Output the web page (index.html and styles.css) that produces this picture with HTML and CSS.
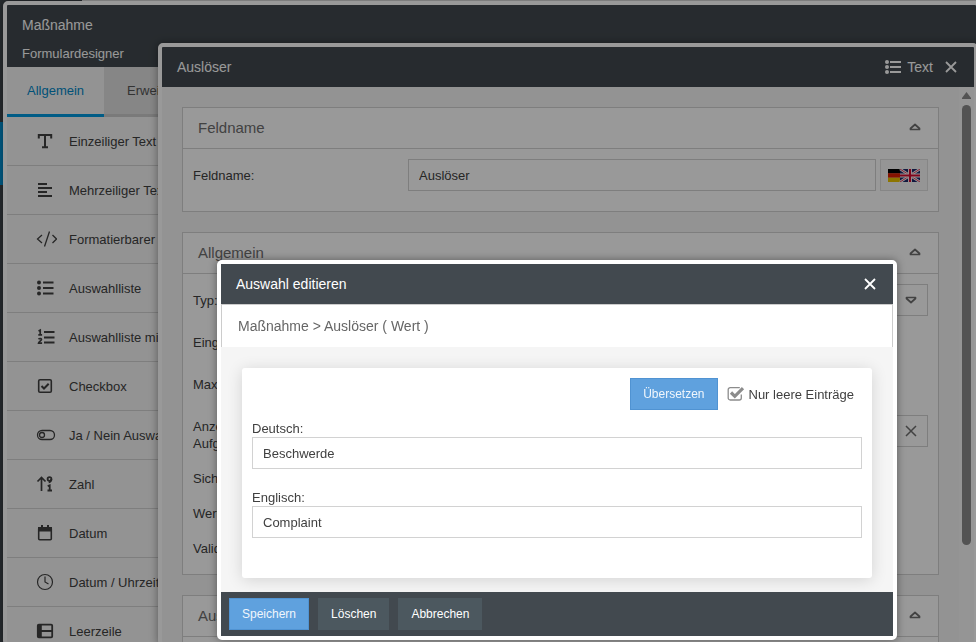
FILE: index.html
```html
<!DOCTYPE html>
<html lang="de">
	<head>
		<meta charset="utf-8">
		<meta name="viewport" content="width=device-width, initial-scale=1.0">
		<title>Formulardesigner</title>
		<link rel="stylesheet" href="styles.css">
	</head>
	<body>
		<div class="sidebar"><div class="sidebar-active"></div></div>

		<!-- Form designer -->
		<section class="window designer">
			<header class="designer-header">
				<h1>Maßnahme</h1>
				<h2>Formulardesigner</h2>
			</header>
			<nav class="tabs">
				<a class="tab active" href="#allgemein">Allgemein</a>
				<a class="tab" href="#erweitert">Erweitert</a>
			</nav>
			<ul class="fields">
				<li>
					<svg class="icon" viewBox="0 0 24 24"><path d="M5.800 9.500V6h12.400v3.500M12 6v12M9 18.200h6" stroke-width="2"/></svg>
					<span>Einzeiliger Text</span>
				</li>
				<li>
					<svg class="icon" viewBox="0 0 24 24"><path d="M5 6h9M5 10h14M5 14h9M5 18h14" stroke-width="2"/></svg>
					<span>Mehrzeiliger Text</span>
				</li>
				<li>
					<svg class="icon" viewBox="0 0 24 24"><path d="M9 8l-4.500 4L9 16M19.500 8l4 4-4 4M16.500 4.500l-5 15" stroke-width="1.300"/></svg>
					<span>Formatierbarer Text</span>
				</li>
				<li>
					<svg class="icon" viewBox="0 0 24 24"><path d="M10 6.500h10.500M10 12h10.500M10 17.500h10.500" stroke-width="2"/><g class="solid"><circle cx="6" cy="6.500" r="2"/><circle cx="6" cy="12" r="2"/><circle cx="6" cy="17.500" r="2"/></g></svg>
					<span>Auswahlliste</span>
				</li>
				<li>
					<svg class="icon" viewBox="0 0 24 24"><path d="M11 7h10.500M11 12.500h10.500M11 17.500h10.500" stroke-width="2"/><path d="M5.500 6l1.700-.8v4.600M5.300 9.800h3.800M5.500 14.300c1-1.300 3-.9 3 .3 0 1.200-3 2.100-3 3.600h3.600" stroke-width="1.700"/></svg>
					<span>Auswahlliste mit Wert</span>
				</li>
				<li>
					<svg class="icon" viewBox="0 0 24 24"><rect x="5.700" y="5.700" width="12.600" height="12.600" rx="1.300" stroke-width="1.600"/><path d="M8.500 12l2.500 2.500 4.700-4.800" stroke-width="2"/></svg>
					<span>Checkbox</span>
				</li>
				<li>
					<svg class="icon" viewBox="0 0 24 24"><rect x="4.500" y="7.500" width="17" height="9" rx="4.500" stroke-width="1.300"/><circle cx="9" cy="12" r="2.500" stroke-width="1.300"/></svg>
					<span>Ja / Nein Auswahl</span>
				</li>
				<li>
					<svg class="icon" viewBox="0 0 24 24"><path d="M8.500 19V5.500M4.500 9.500l4-4 4 4" stroke-width="1.700"/><circle cx="16.500" cy="7" r="1.900" stroke-width="1.800"/><path d="M18.400 7c0 2-.9 3-2.700 3.300M14.700 14.200l2-.8v5M14.500 18.500h4.500" stroke-width="1.800"/></svg>
					<span>Zahl</span>
				</li>
				<li>
					<svg class="icon" viewBox="0 0 24 24"><rect x="5.700" y="6.700" width="12.600" height="12" rx="1" stroke-width="1.600"/><path class="solid" d="M5 6h14v4.500H5zM8 4h2v3H8zM14 4h2v3h-2z"/></svg>
					<span>Datum</span>
				</li>
				<li>
					<svg class="icon" viewBox="0 0 24 24"><circle cx="12" cy="12" r="7.500" stroke-width="1.200"/><path d="M12 6.500V12l3.500 2" stroke-width="1.200"/></svg>
					<span>Datum / Uhrzeit</span>
				</li>
				<li>
					<svg class="icon" viewBox="0 0 24 24"><rect x="4.800" y="5.700" width="14.400" height="12.600" rx="1" stroke-width="1.800"/><path d="M8 12h11.200" stroke-width="1.800"/><path class="solid" d="M4.800 5.700h4v12.600h-4z"/></svg>
					<span>Leerzeile</span>
				</li>
			</ul>
		</section>

		<!-- Field settings -->
		<section class="window settings">
			<header class="window-header">
				<h2>Auslöser</h2>
				<span class="field-type">
					<svg class="type-icon" viewBox="0 0 18 16"><path d="M6 3h11M6 8h11M6 13h11" stroke-width="2"/><g class="solid"><circle cx="3" cy="3" r="2"/><circle cx="3" cy="8" r="2"/><circle cx="3" cy="13" r="2"/></g></svg>
					Text
				</span>
				<button class="close" type="button" aria-label="Schließen">
					<svg viewBox="0 0 12 12"><path d="M1 1l10 10M11 1L1 11" stroke-width="1.800"/></svg>
				</button>
			</header>
			<div class="settings-body">
				<div class="panels">
					<section class="panel">
						<header class="panel-header">
							<h3>Feldname</h3>
							<svg class="arrow" viewBox="0 0 12 8"><path d="M6 1.500L10.500 5.500V6.500H1.500V5.500z"/></svg>
						</header>
						<div class="panel-body">
							<div class="row">
								<label for="feldname">Feldname:</label>
								<input class="text" id="feldname" type="text" value="Auslöser">
								<button class="languages" type="button" aria-label="Sprachen">
									<svg viewBox="0 0 32 13">
										<path fill="#000" d="M0 0h12v4.500H0z"/><path fill="#de1f00" d="M0 4.300h12v4.400H0z"/><path fill="#ebc400" d="M0 8.700h12V13H0z"/>
										<path fill="#1d2a69" d="M12 0h20v13H12z"/>
										<path class="white" stroke-width="2.600" d="M12 0l20 13M32 0L12 13"/>
										<path class="red" stroke-width=".8" d="M12 0l20 13M32 0L12 13"/>
										<path class="white" stroke-width="4" d="M22 0v13M12 6.500h20"/>
										<path class="red" stroke-width="2.200" d="M22 0v13M12 6.500h20"/>
									</svg>
								</button>
							</div>
						</div>
					</section>

					<section class="panel">
						<header class="panel-header">
							<h3>Allgemein</h3>
							<svg class="arrow" viewBox="0 0 12 8"><path d="M6 1.500L10.500 5.500V6.500H1.500V5.500z"/></svg>
						</header>
						<div class="panel-body long">
							<div class="row">
								<label for="typ">Typ:</label>
								<div class="select">
									<select id="typ"><option></option></select>
									<svg class="arrow" viewBox="0 0 12 8"><path d="M6 6.500L10.500 2.500V1.500H1.500V2.500z"/></svg>
								</div>
							</div>
							<div class="row tall"><span>Eingabe:</span></div>
							<div class="row tall"><span>Maximal:</span></div>
							<div class="row">
								<label for="anzeige">Anzeige<br>Aufgabe:</label>
								<div class="clearable">
									<input class="text" id="anzeige" type="text">
									<button type="button" aria-label="Leeren">
										<svg viewBox="0 0 12 12"><path d="M1 1l10 10M11 1L1 11" stroke-width="1.500"/></svg>
									</button>
								</div>
							</div>
							<div class="row"><span>Sichtbar:</span></div>
							<div class="row"><span>Werte:</span></div>
							<div class="row"><span>Validierung:</span></div>
						</div>
					</section>

					<section class="panel">
						<header class="panel-header">
							<h3>Aus</h3>
							<svg class="arrow" viewBox="0 0 12 8"><path d="M6 1.500L10.500 5.500V6.500H1.500V5.500z"/></svg>
						</header>
						<div class="panel-body"></div>
					</section>
				</div>
				<div class="scrollbar">
					<svg viewBox="0 0 9 8"><path class="solid" d="M4.500 0L9 6v1H0V6z"/></svg>
					<div class="thumb"></div>
				</div>
			</div>
		</section>

		<div class="overlay"></div>

		<!-- Edit dialog -->
		<form class="window dialog" role="dialog" aria-labelledby="dialog-title">
			<header class="window-header">
				<h2 id="dialog-title">Auswahl editieren</h2>
				<button class="close" type="button" aria-label="Schließen">
					<svg viewBox="0 0 12 12"><path d="M1 1l10 10M11 1L1 11" stroke-width="1.800"/></svg>
				</button>
			</header>
			<div class="breadcrumb">Maßnahme &gt; Auslöser ( Wert )</div>
			<div class="dialog-body">
				<div class="card">
					<div class="card-actions">
						<button class="button primary" type="button">Übersetzen</button>
						<label class="check">
							<input type="checkbox" checked>
							<svg viewBox="0 0 18 16"><path d="M14.300 8.500V12a2 2 0 0 1-2 2H3.200a2 2 0 0 1-2-2V3.600a2 2 0 0 1 2-2h9.600" stroke-width="1.300"/><path d="M4 6.500l3.800 3.800L16 2.200" stroke-width="3.200"/></svg>
							Nur leere Einträge
						</label>
					</div>
					<div class="translation">
						<label for="deutsch">Deutsch:</label>
						<input class="text" id="deutsch" type="text" value="Beschwerde">
					</div>
					<div class="translation">
						<label for="englisch">Englisch:</label>
						<input class="text" id="englisch" type="text" value="Complaint">
					</div>
				</div>
			</div>
			<footer class="dialog-footer">
				<button class="button primary" type="submit">Speichern</button>
				<button class="button" type="button">Löschen</button>
				<button class="button" type="button">Abbrechen</button>
			</footer>
		</form>
	</body>
</html>
```
FILE: styles.css
```css
* {
	box-sizing: border-box;
	margin: 0;
	padding: 0;
}

html,
body {
	height: 100%;
}

body {
	font: 13px/17px "Liberation Sans", Arial, sans-serif;
	color: #404040;
	background: #fff;
	overflow: hidden;
}

h1,
h2,
h3 {
	font-weight: normal;
}

button,
input,
select {
	font: inherit;
	color: inherit;
}

button {
	border: 0;
	cursor: pointer;
}

svg {
	display: block;
	flex: none;
	fill: none;
	stroke: currentColor;
}

svg .solid,
svg [fill] {
	stroke: none;
}

svg .solid {
	fill: currentColor;
}

.sidebar {
	width: 82px;
	height: 100%;
	padding-top: 122px;
	background: #42494f;
}

.sidebar-active {
	height: 63px;
	background: #0099e0;
}

/* Windows */

.window {
	position: absolute;
	display: flex;
	flex-direction: column;
	border: 4px solid #fff;
	border-radius: 5px;
	background: #f5f5f5;
	box-shadow: 0 0 8px rgba(0, 0, 0, 0.4);
}

.window-header {
	display: flex;
	align-items: center;
	flex: none;
	height: 40px;
	padding: 0 15px;
	background: #42494f;
	color: #fff;
}

.window-header h2 {
	flex: 1;
	font-size: 14px;
}

.close {
	padding: 2px;
	background: none;
}

.close svg {
	width: 12px;
	height: 12px;
}

/* Form designer */

.designer {
	top: 1px;
	left: 3px;
	right: -4px;
	bottom: -4px;
	overflow: hidden;
}

.designer-header {
	flex: none;
	padding: 0 15px 4px;
	background: #42494f;
	color: #fff;
}

.designer-header h1 {
	font-size: 14px;
	line-height: 40px;
}

.designer-header h2 {
	font-size: 13px;
	line-height: 18px;
}

.tabs {
	display: flex;
	flex: none;
	background: #e0e0e0;
	border-bottom: 3px solid #cbcbcb;
}

.tab {
	padding: 0 23px;
	line-height: 47px;
	color: #555;
	text-decoration: none;
}

.tab.active {
	padding: 0 20px;
	margin-bottom: -3px;
	background: #f5f5f5;
	border-bottom: 3px solid #0099e0;
	color: #0088c8;
}

.fields {
	list-style: none;
}

.fields li {
	display: flex;
	align-items: center;
	gap: 12px;
	height: 49px;
	padding-left: 26px;
	border-bottom: 1px solid #d2d2d2;
}

.icon {
	width: 24px;
	height: 24px;
}

/* Field settings */

.settings {
	top: 43px;
	left: 158px;
	right: -2px;
	bottom: -4px;
	overflow: hidden;
}

.field-type {
	display: flex;
	align-items: center;
	gap: 5px;
	margin-right: 10px;
	font-size: 14px;
}

.type-icon {
	width: 18px;
	height: 16px;
}

.settings-body {
	display: flex;
	flex: 1;
	min-height: 0;
}

.panels {
	display: flex;
	flex-direction: column;
	flex: 1;
	gap: 20px;
	padding: 20px;
	overflow: hidden;
}

.panel {
	flex: none;
	border: 1px solid #d2d2d2;
	background: #fff;
}

.panel-header {
	display: flex;
	align-items: center;
	justify-content: space-between;
	height: 41px;
	padding: 0 17px 2px 15px;
	border-bottom: 1px solid #d2d2d2;
	color: #6e6e6e;
}

.panel-header h3 {
	font-size: 15px;
}

.arrow {
	width: 12px;
	height: 8px;
	stroke-width: 1.7;
	stroke-linejoin: round;
}

.panel-body {
	display: flex;
	flex-direction: column;
	gap: 10px;
	padding: 10px 10px 20px;
}

.panel-body.long {
	padding-bottom: 17px;
}

.row {
	display: flex;
	align-items: flex-start;
}

.row.tall {
	min-height: 32px;
}

.row label,
.row > span {
	flex: none;
	width: 215px;
	padding-top: 8px;
}

.text {
	display: block;
	flex: 1;
	width: 100%;
	min-width: 0;
	height: 32px;
	padding: 0 10px;
	border: 1px solid #d2d2d2;
	background: #fff;
}

.languages {
	display: flex;
	align-items: center;
	justify-content: center;
	width: 48px;
	height: 32px;
	margin-left: 4px;
	border: 1px solid #e0e0e0;
	background: #f9f9f9;
}

.languages svg {
	width: 32px;
	height: 13px;
	stroke: none;
}

.languages .white {
	stroke: #fff;
}

.languages .red {
	stroke: #d80a30;
}

.select {
	position: relative;
	flex: 1;
}

.select select {
	display: block;
	width: 100%;
	height: 32px;
	padding: 0 10px;
	border: 1px solid #d2d2d2;
	border-radius: 0;
	background: #fff;
	appearance: none;
}

.select .arrow {
	position: absolute;
	top: 12px;
	right: 11px;
	color: #6e6e6e;
	pointer-events: none;
}

.clearable {
	display: flex;
	flex: 1;
	margin-top: 5px;
}

.clearable button {
	display: flex;
	align-items: center;
	justify-content: center;
	width: 34px;
	border: 1px solid #d2d2d2;
	border-left: 0;
	background: #fff;
	color: #6e6e6e;
}

.clearable svg {
	width: 12px;
	height: 12px;
}

.scrollbar {
	flex: none;
	width: 15px;
	padding: 5px 3px 0;
	background: #f9f9f9;
	color: #8a8a8a;
}

.scrollbar svg {
	width: 9px;
	height: 8px;
}

.thumb {
	height: 80%;
	margin-top: 5px;
	border-radius: 5px;
	background: #8a8a8a;
}

.overlay {
	position: fixed;
	top: 0;
	left: 0;
	width: 100%;
	height: 100%;
	background: rgba(0, 0, 0, 0.4);
}

/* Edit dialog */

.dialog {
	top: 260px;
	left: 217px;
	right: 79px;
}

.breadcrumb {
	padding: 0 16px;
	border: 1px solid #ccc;
	border-bottom: 0;
	background: #fff;
	color: #666;
	font-size: 14px;
	line-height: 42px;
}

.dialog-body {
	padding: 21px 21px 14px;
}

.card {
	display: flex;
	flex-direction: column;
	padding: 10px 10px 20px;
	border-radius: 3px;
	background: #fff;
	box-shadow: 0 2px 16px rgba(0, 0, 0, 0.14);
}

.card-actions {
	display: flex;
	justify-content: flex-end;
	align-items: center;
	gap: 9px;
	margin-bottom: 10px;
	padding-right: 8px;
}

.check {
	position: relative;
	display: flex;
	align-items: center;
	gap: 4px;
}

.check input {
	position: absolute;
	width: 18px;
	height: 16px;
	opacity: 0;
}

.check svg {
	width: 18px;
	height: 16px;
	color: #8c8c8c;
}

.translation {
	margin-bottom: 20px;
}

.translation label {
	display: block;
}

.button {
	height: 32px;
	padding: 0 13px;
	background: #4c585f;
	color: #fff;
	font-size: 12px;
}

.button.primary {
	padding: 0 12px;
	border: 1px solid #5093d2;
	background: #5fa1de;
	color: #f0f6fc;
}

.dialog-footer {
	display: flex;
	gap: 9px;
	padding: 6px 8px;
	background: #42494f;
}
```
